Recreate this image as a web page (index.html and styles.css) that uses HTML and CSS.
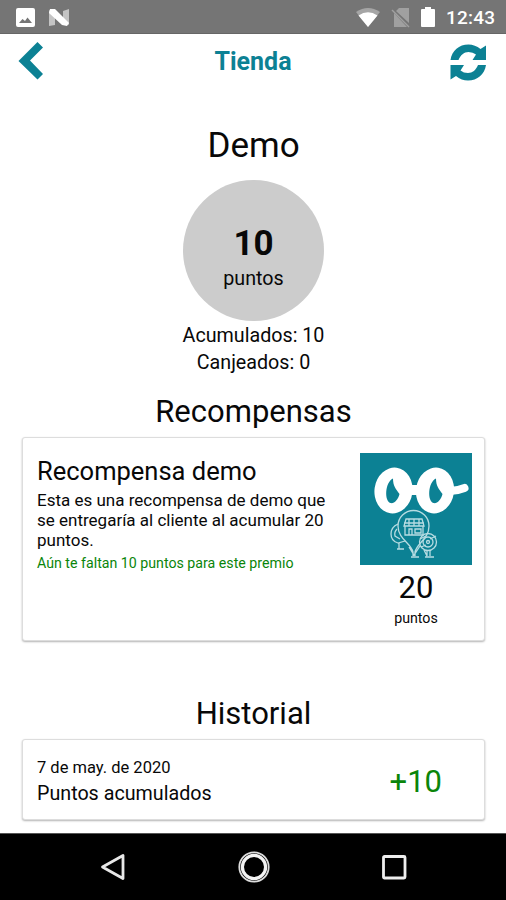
FILE: index.html
```html
<!DOCTYPE html>
<html lang="es">
<head>
<meta charset="utf-8">
<title>Tienda</title>
<link rel="stylesheet" href="styles.css">
</head>
<body>
<div class="statusbar">
  <svg class="notif" width="56" height="20" viewBox="0 0 56 20">
    <path fill="#fff" fill-rule="evenodd" d="M2 0H17Q19 0 19 2V17Q19 19 17 19H2Q0 19 0 17V2Q0 0 2 0ZM3 15H16L11.500 9.500 9 13 6.500 11Z"/>
    <path fill="#c4c4c4" d="M33 2L39 7V17L33 18ZM47 3L53 1V17L47 13Z"/>
    <path fill="#fff" d="M34 1L39 1 53 15 51 18 46 17 33 5Z"/>
  </svg>
  <svg class="signals" width="82" height="22" viewBox="0 0 82 22">
    <path fill="#a5a5a5" d="M0 5Q12-3 24 5L12 20Z"/>
    <path fill="#fff" d="M2.500 8.500Q12 2 21.500 8.500L12 20Z"/>
    <path fill="#a0a0a0" d="M43 1H53V16L40 4ZM38 6L51 20H38Z"/>
    <path stroke="#a0a0a0" stroke-width="1.500" d="M36 3L53 20"/>
    <path fill="#fff" d="M69 0H75V2H78Q79 2 79 3V19Q79 20 78 20H66Q65 20 65 19V3Q65 2 66 2H69Z"/>
  </svg>
  <span class="clock">12:43</span>
</div>
<header class="topbar">
  <svg class="back" width="26" height="40" viewBox="0 0 26 40"><path fill="#0c8194" d="M19.500 1L25 6.500 12 19.500 25 33 19.500 38.500.5 20Z"/></svg>
  <h1 class="title">Tienda</h1>
  <svg class="refresh" width="37" height="37" viewBox="0 0 37 37">
    <path fill="#0c8194" d="M.5 16C2 6.500 9 .5 18.500.5Q25 .5 30.500 5L36 1.500V16H22.500L26 10.500Q23 8 18.500 8C14 8 10.500 11 8.500 16Z"/>
    <path fill="#0c8194" d="M36 21C34.500 30.500 27.500 36.500 18 36.500Q11.500 36.500 6 32L.5 35.500V21H14L10.500 26.500Q13.500 29 18 29C22.500 29 26 26 28 21Z"/>
  </svg>
</header>
<main class="content">
  <h2 class="shop">Demo</h2>
  <div class="circle"><strong class="total">10</strong><span class="unit">puntos</span></div>
  <p class="stat first">Acumulados: 10</p>
  <p class="stat">Canjeados: 0</p>
  <h3 class="section">Recompensas</h3>
  <section class="card reward">
    <div class="info">
      <h4 class="name">Recompensa demo</h4>
      <p class="desc">Esta es una recompensa de demo que<br>se entregaría al cliente al acumular 20<br>puntos.</p>
      <p class="missing">Aún te faltan 10 puntos para este premio</p>
    </div>
    <div class="cost">
      <svg width="112" height="112" viewBox="0 0 112 112">
        <path fill="#0c8194" d="M0 0H112V112H0Z"/>
        <ellipse cx="33.500" cy="37.500" rx="19" ry="23" fill="#fff" transform="rotate(8 33.500 37.500)"/>
        <ellipse cx="75" cy="37.500" rx="19" ry="23" fill="#fff" transform="rotate(8 75 37.500)"/>
        <path stroke="#fff" stroke-width="10" d="M48 37H62"/>
        <path stroke="#fff" stroke-width="8" stroke-linecap="round" fill="none" d="M90 38Q97 38 104.500 35"/>
        <g fill="#0c8194">
          <path d="M33 25.500C33 33 36 36 39.500 41C38 47 34 51 30.500 50C24 48 25 29 33 25.500Z"/>
          <path d="M76 25.500C76 33 79 36 82.500 41C81 47 77 51 73.500 50C67 48 68 29 76 25.500Z"/>
        </g>
        <g fill="none" stroke="#b7dce2" stroke-width="1.300">
          <path d="M53 103V99C51 90 38 86 38 73A15.500 15.500 0 0 1 69 73C69 86 57 90 55 99V103M49 94L54 102 60 93M51 104H59"/>
          <path d="M46 66H62L64 73H44ZM45 73V82H63V73M49 66V73M54 66V73M59 66V73M44 70H64M49 82V76H52V82M55 76H61V80H55Z"/>
          <path d="M38 71Q31 74 31 81 31 88 38 90L45 88M37 76Q34 79 35 83L40 86M39 90V96M37 96H44"/>
          <circle cx="68" cy="89" r="8.500"/><circle cx="68" cy="89" r="5"/><circle cx="68" cy="89" r="1.500"/>
          <path d="M64 97L67 103V97M70 97V103M65 104H74M60 86L66 83M61 94L66 92M70 86L76 83"/>
        </g>
      </svg>
      <span class="price">20</span>
      <span class="small">puntos</span>
    </div>
  </section>
  <h3 class="section history-title">Historial</h3>
  <section class="card history">
    <div>
      <p class="date">7 de may. de 2020</p>
      <p class="event">Puntos acumulados</p>
    </div>
    <span class="gain">+10</span>
  </section>
</main>
<nav class="navbar">
  <svg width="28" height="32" viewBox="0 0 28 32"><path d="M24 4.500V27.500L3.500 16Z" fill="none" stroke="#e8e8e8" stroke-width="2.800" stroke-linejoin="round"/></svg>
  <svg width="34" height="34" viewBox="0 0 34 34"><circle cx="17" cy="17" r="14.700" fill="none" stroke="#ddd" stroke-width="1.800"/><circle cx="17" cy="17" r="11.600" fill="none" stroke="#f4f4f4" stroke-width="3.200"/></svg>
  <svg width="26" height="26" viewBox="0 0 26 26"><rect x="2.500" y="2.500" width="21.500" height="21.500" rx="1" fill="none" stroke="#eee" stroke-width="2.800"/></svg>
</nav>
</body>
</html>
```
FILE: styles.css
```css
* { box-sizing: border-box; }
body, h1, h2, h3, h4, p { margin: 0; font-weight: 400; }
body { width: 506px; height: 900px; overflow: hidden; background: #fff; color: #080808; font-family: Roboto, sans-serif; display: flex; flex-direction: column; }
svg { display: block; flex: none; }

.statusbar { height: 34px; flex: none; background: #757575; border-bottom: 1px solid #666; display: flex; align-items: center; padding: 2px 10px 0 16px; color: #fff; }
.signals { margin: 0 8px 0 auto; width: 82px; }
.clock { width: 50px; font-size: 19px; line-height: 24px; font-weight: 500; letter-spacing: .2px; padding-top: 1px; }

.topbar { height: 57px; flex: none; display: flex; align-items: flex-start; justify-content: space-between; padding: 7px 19px 0 18px; }
.title { font-size: 25px; line-height: 30px; font-weight: 700; color: #0c8194; padding: 6px 0 0 12px; }
.refresh { margin-top: 3px; }

.content { flex: 1; padding: 33px 21px 0 22px; display: flex; flex-direction: column; align-items: center; }
.shop { font-size: 35px; line-height: 44px; }
.circle { width: 141px; height: 141px; flex: none; margin-top: 12px; border-radius: 50%; background: #ccc; display: flex; flex-direction: column; align-items: center; padding-top: 43px; }
.total { font-size: 35px; line-height: 42px; font-weight: 700; }
.unit { font-size: 19.700px; line-height: 28px; }
.stat { font-size: 19.700px; line-height: 27px; }
.first { margin-top: 1px; }
.section { font-size: 31px; line-height: 40px; margin-top: 16px; }

.card { width: 463px; flex: none; background: #fff; border: 1px solid #ddd; border-radius: 3px; box-shadow: 0 1px 2px rgba(0, 0, 0, .3); display: flex; justify-content: space-between; }
.reward { height: 204px; margin-top: 5px; padding: 15px 12px 0 14px; }
.name { font-size: 25.500px; line-height: 37px; }
.desc { font-size: 17px; line-height: 20px; white-space: nowrap; }
.missing { font-size: 14.200px; line-height: 20px; margin-top: 3px; color: #0a850a; white-space: nowrap; }
.cost { width: 112px; display: flex; flex-direction: column; align-items: center; }
.price { font-size: 31px; line-height: 46px; }
.small { font-size: 14.200px; line-height: 14px; }
.history-title { margin-top: 53px; }
.history { height: 81px; margin-top: 5px; padding: 15px 42px 0 14px; }
.date { font-size: 16.500px; line-height: 26px; }
.event { font-size: 19.700px; line-height: 25px; }
.gain { font-size: 31px; line-height: 54px; color: #0a850a; }

.navbar { height: 67px; flex: none; background: #000; border-top: 1px solid #555; display: flex; align-items: center; justify-content: space-between; padding: 0 99px; }
```
